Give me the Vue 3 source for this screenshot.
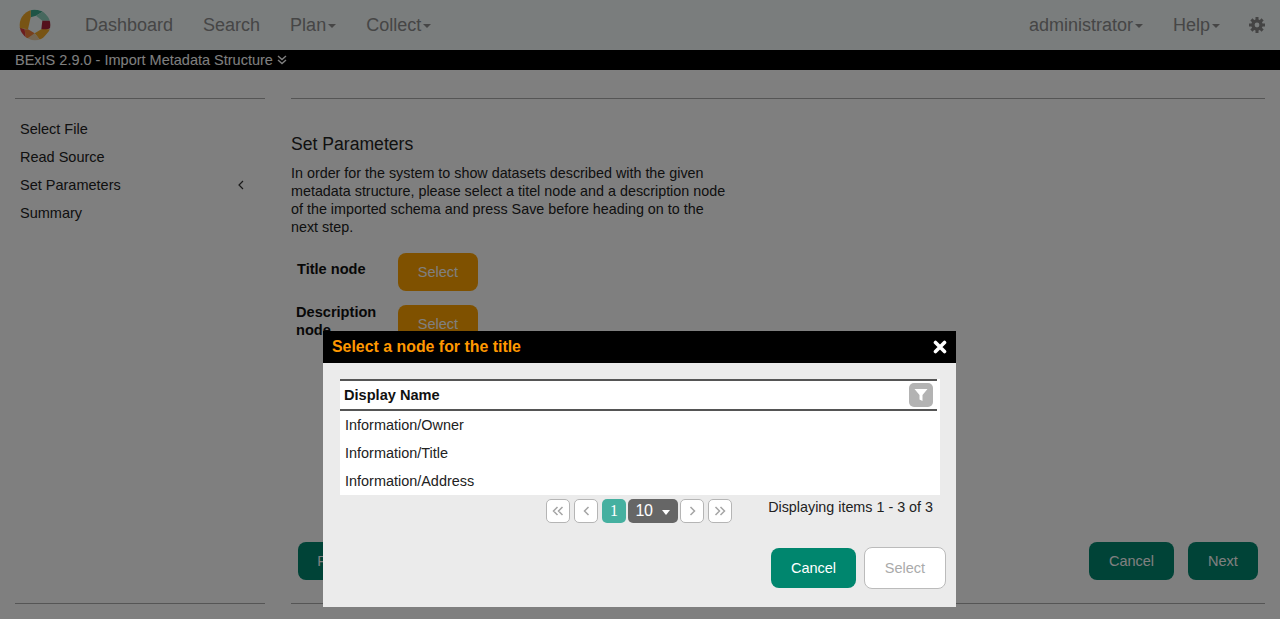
<script setup>
const navLeft = [
  { label: 'Dashboard' },
  { label: 'Search' },
  { label: 'Plan', caret: true },
  { label: 'Collect', caret: true }
]
const steps = ['Select File', 'Read Source', 'Set Parameters', 'Summary']
const rows = ['Information/Owner', 'Information/Title', 'Information/Address']

// logo pieces, traced from the reference at 3x
const logoPieces = [
  { fill: '#3fa88c', points: '92,25 130,34 108,47 92,52' },
  { fill: '#8fd0bc', points: '130,34 155,62 127,62 108,47' },
  { fill: '#a82038', points: '127,62 155,62 155,82 133,92 124,88' },
  { fill: '#f0a828', points: '124,88 152,88 122,122 104,100' },
  { fill: '#e8cca4', points: '104,100 122,122 90,125 78,108' },
  { fill: '#f08038', points: '84,88 104,100 78,118 74,88' },
  { fill: '#d83c3c', points: '55,80 74,88 78,118 60,110' },
  { fill: '#f0a828', points: '92,25 92,52 84,88 55,84 55,50' }
]
</script>

<template>
  <div class="page">
    <header class="nav">
      <svg class="logo" width="34" height="34" viewBox="54 24 102 102">
        <defs><clipPath id="logoClip"><circle cx="105" cy="75" r="46" /></clipPath></defs>
        <g clip-path="url(#logoClip)">
          <polygon v-for="(p, i) in logoPieces" :key="i" :points="p.points" :fill="p.fill" />
        </g>
      </svg>
      <a v-for="n in navLeft" :key="n.label" class="nav-link">{{ n.label }}<i v-if="n.caret" class="caret"></i></a>
      <div class="nav-right">
        <a class="nav-link">administrator<i class="caret"></i></a>
        <a class="nav-link">Help<i class="caret"></i></a>
        <svg class="gear" width="16" height="16" viewBox="-8 -8 16 16">
          <g stroke="#888" stroke-width="3">
            <line x1="-8" y1="0" x2="8" y2="0" />
            <line x1="0" y1="-8" x2="0" y2="8" />
            <line x1="-5.6" y1="-5.6" x2="5.6" y2="5.6" />
            <line x1="-5.6" y1="5.6" x2="5.6" y2="-5.6" />
          </g>
          <circle r="4.2" fill="none" stroke="#888" stroke-width="3" />
          <circle r="2.4" fill="#f4fafa" />
        </svg>
      </div>
    </header>
    <div class="titlebar">
      <span>BExIS 2.9.0 - Import Metadata Structure</span>
      <svg width="10" height="10" viewBox="0 0 10 10" fill="none" stroke="#fff" stroke-width="1.4">
        <path d="M1 1l4 3.5L9 1M1 5l4 3.5L9 5" />
      </svg>
    </div>

    <main class="main">
      <aside class="side">
        <ul class="steps">
          <li v-for="s in steps" :key="s" class="step">
            {{ s }}
            <svg v-if="s === 'Set Parameters'" width="6" height="10" viewBox="0 0 6 10" fill="none" stroke="#333" stroke-width="1.2">
              <path d="M5 1L1 5l4 4" />
            </svg>
          </li>
        </ul>
      </aside>
      <section class="content">
        <h2 class="heading">Set Parameters</h2>
        <p class="intro">In order for the system to show datasets described with the given metadata structure, please select a titel node and a description node of the imported schema and press Save before heading on to the next step.</p>
        <div class="param">
          <label class="param-label">Title node</label>
          <button class="btn orange">Select</button>
        </div>
        <div class="param second">
          <label class="param-label">Description node</label>
          <button class="btn orange">Select</button>
        </div>
        <div class="actions">
          <button class="btn green prev">Previous</button>
          <button class="btn green cancel">Cancel</button>
          <button class="btn green next">Next</button>
        </div>
      </section>
    </main>

    <div class="overlay"></div>

    <div class="dialog">
      <div class="dialog-head">
        <span>Select a node for the title</span>
        <svg width="14" height="14" viewBox="0 0 14 14" stroke="#fff" stroke-width="3.6" stroke-linecap="round">
          <path d="M2.5 2.5l9 9M11.5 2.5l-9 9" />
        </svg>
      </div>
      <div class="dialog-body">
        <div class="grid">
          <div class="grid-head">
            <span>Display Name</span>
            <span class="filter">
              <svg width="16" height="16" viewBox="0 0 16 16"><path d="M1.5 2h13L9.5 8v6L6.5 12.5V8z" fill="#fff" /></svg>
            </span>
          </div>
          <div v-for="r in rows" :key="r" class="grid-row">{{ r }}</div>
        </div>
        <div class="pager">
          <div class="pages">
            <span class="pg"><svg width="12" height="10" viewBox="0 0 12 10"><path d="M5.5 1L1.5 5l4 4M10.5 1l-4 4 4 4" /></svg></span>
            <span class="pg"><svg width="7" height="10" viewBox="0 0 7 10"><path d="M5.5 1L1.5 5l4 4" /></svg></span>
            <span class="pg current">1</span>
            <span class="size">10<i class="size-caret"></i></span>
            <span class="pg"><svg width="7" height="10" viewBox="0 0 7 10"><path d="M1.5 1l4 4-4 4" /></svg></span>
            <span class="pg"><svg width="12" height="10" viewBox="0 0 12 10"><path d="M1.5 1l4 4-4 4M6.5 1l4 4-4 4" /></svg></span>
          </div>
          <span class="info">Displaying items 1 - 3 of 3</span>
        </div>
        <div class="dialog-foot">
          <button class="btn modal-cancel">Cancel</button>
          <button class="btn modal-select">Select</button>
        </div>
      </div>
    </div>
  </div>
</template>

<style>
html, body { margin: 0; height: 100%; overflow: hidden; }
</style>

<style scoped>
.page {
  position: relative;
  width: 1280px;
  height: 619px;
  overflow: hidden;
  background: #fff;
  font-family: "Liberation Sans", Arial, sans-serif;
  font-size: 14.33px;
  color: #222;
}
.nav {
  display: flex;
  align-items: center;
  height: 50px;
  padding: 0 15px 0 18px;
  box-sizing: border-box;
  background: #f4fafa;
}
.logo { margin-right: 33px; flex-shrink: 0; }
.nav-link {
  display: inline-flex;
  align-items: center;
  font-size: 18px;
  color: #8c8c8c;
  margin-right: 30px;
}
.caret {
  width: 0;
  height: 0;
  margin-left: 2px;
  margin-top: 2px;
  border-left: 4px solid transparent;
  border-right: 4px solid transparent;
  border-top: 4px solid #8c8c8c;
}
.nav-right { margin-left: auto; display: flex; align-items: center; }
.nav-right .nav-link:nth-child(2) { margin-right: 29px; }
.titlebar {
  display: flex;
  align-items: center;
  gap: 4px;
  height: 20px;
  padding-left: 15px;
  background: #000;
  color: #fff;
  font-size: 14.5px;
}
.main { display: flex; height: 549px; padding: 28px 15px 0; box-sizing: border-box; gap: 26px; }
.side {
  width: 250px;
  height: 506px;
  flex-shrink: 0;
  box-sizing: border-box;
  border-top: 1px solid #aaa;
  border-bottom: 1px solid #aaa;
}
.steps { list-style: none; margin: 16px 0 0; padding: 0 21px 0 5px; }
.step {
  display: flex;
  justify-content: space-between;
  align-items: center;
  height: 28px;
  font-size: 14.5px;
  color: #222;
}
.content {
  flex: 1;
  height: 506px;
  box-sizing: border-box;
  border-top: 1px solid #aaa;
  border-bottom: 1px solid #aaa;
  display: flex;
  flex-direction: column;
}
.heading { margin: 34px 0 0; font-size: 17.6px; font-weight: 400; line-height: 22px; color: #222; }
.intro { margin: 9px 0 0; width: 440px; line-height: 18px; }
.param { display: flex; align-items: flex-start; margin-top: 17px; padding-left: 6px; }
.param.second { margin-top: 14px; }
.param-label { width: 101px; flex-shrink: 0; font-size: 14.6px; font-weight: 700; line-height: 18px; margin-top: 7px; color: #111; }
.second .param-label { width: 90px; margin: -2px 12px 0 -1px; }
.btn {
  font-family: inherit;
  font-size: 14.5px;
  border: 0;
  border-radius: 8px;
  padding: 0;
  box-sizing: border-box;
}
.orange { width: 80px; height: 38px; background: #ffa300; color: #fff; }
.green { height: 38px; background: #00866e; color: #fff; }
.actions { display: flex; margin-top: auto; margin-bottom: 23px; padding: 0 7px; gap: 14px; }
.prev { width: 95px; margin-right: auto; }
.cancel { width: 85px; }
.next { width: 70px; }
.overlay { position: absolute; inset: 0; background: rgba(0, 0, 0, 0.5); }
.dialog {
  position: absolute;
  left: 323px;
  top: 331px;
  width: 633px;
  height: 276px;
  background: #ebebeb;
}
.dialog-head {
  display: flex;
  justify-content: space-between;
  align-items: center;
  height: 32px;
  padding: 0 9px 0 9px;
  background: #000;
  color: #ff9800;
  font-size: 15.9px;
  font-weight: 700;
}
.dialog-body { padding: 16px 10px 0 17px; }
.grid { width: 600px; height: 116px; background: #fff; }
.grid-head {
  display: flex;
  justify-content: space-between;
  align-items: center;
  width: 597px;
  height: 32px;
  box-sizing: border-box;
  padding: 0 4px;
  border-top: 2px solid #555;
  border-bottom: 2px solid #555;
  font-size: 14.6px;
  font-weight: 700;
  color: #111;
}
.filter {
  display: flex;
  align-items: center;
  justify-content: center;
  width: 24px;
  height: 24px;
  border-radius: 5px;
  background: #b3b3b3;
}
.grid-row { height: 28px; line-height: 28px; padding-left: 5px; font-size: 14.45px; color: #222; }
.pager { display: flex; justify-content: space-between; width: 593px; margin-top: 4px; }
.pages { display: flex; gap: 4px; margin-left: 206px; height: 24px; }
.pg {
  display: flex;
  align-items: center;
  justify-content: center;
  width: 24px;
  height: 24px;
  box-sizing: border-box;
  border: 1px solid #b5b5b5;
  border-radius: 5px;
  background: #fff;
}
.pg svg { fill: none; stroke: #a5a5a5; stroke-width: 1.5; }
.pg.current {
  border: 0;
  background: #45b0a0;
  color: #fff;
  font-family: "Liberation Serif", serif;
  font-size: 16px;
}
.size {
  display: flex;
  align-items: center;
  width: 50px;
  height: 24px;
  margin-left: -2px;
  margin-right: -2px;
  box-sizing: border-box;
  padding-left: 7.5px;
  border-radius: 5px;
  background: #666;
  color: #fff;
  font-size: 16px;
  letter-spacing: -0.5px;
}
.size-caret {
  width: 0;
  height: 0;
  margin-left: 10px;
  margin-top: 2px;
  border-left: 4.5px solid transparent;
  border-right: 4.5px solid transparent;
  border-top: 5px solid #fff;
}
.info { line-height: 16px; color: #222; }
.dialog-foot { display: flex; align-items: center; gap: 8px; margin-top: 24px; padding-left: 431px; }
.modal-cancel { width: 85px; height: 40px; background: #00866e; color: #fff; }
.modal-select { width: 82px; height: 42px; background: #fff; border: 1px solid #bbb; color: #aaa; }
</style>
